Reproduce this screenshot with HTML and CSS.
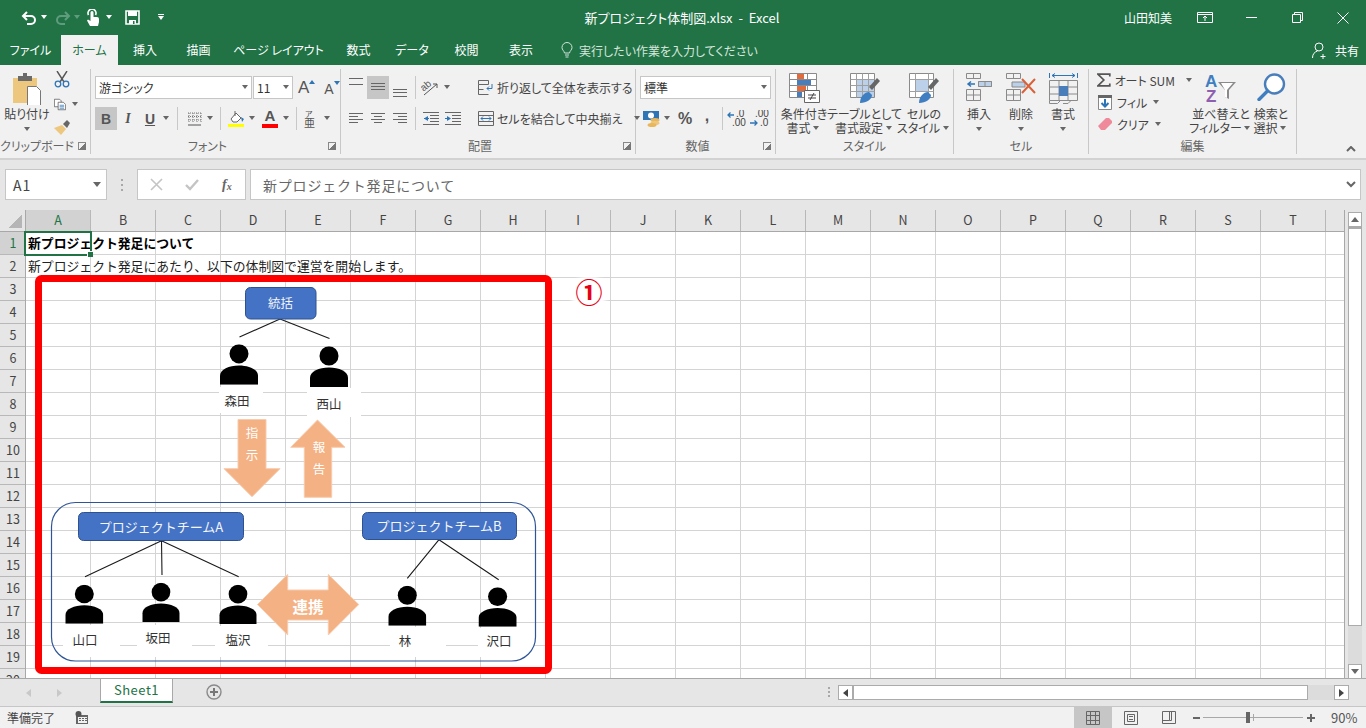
FILE: index.html
```html
<!DOCTYPE html>
<html lang="ja">

<head>
    <meta charset="UTF-8">
    <title>新プロジェクト体制図.xlsx - Excel</title>
    <link rel="stylesheet" href="styles.css">
</head>

<body>
    <!-- タイトルバー -->
    <div class="titlebar">
        <div class="qat">
            <svg class="q-undo" width="16" height="16" viewBox="0 0 16 16"><path d="M6 2L2 6l4 4M2 6h8a4 4 0 0 1 0 8H6" fill="none" stroke="#fff" stroke-width="2"/></svg>
            <i class="cr w q1"></i>
            <svg class="q-redo" width="16" height="16" viewBox="0 0 16 16"><path d="M10 2l4 4-4 4M14 6H6a4 4 0 0 0 0 8h4" fill="none" stroke="#5f9c7d" stroke-width="2"/></svg>
            <i class="cr d q2"></i>
            <svg class="q-hand" width="14" height="17" viewBox="0 0 14 17"><path d="M2.5 6a4 4 0 1 1 7 0" fill="none" stroke="#fff" stroke-width="1.6"/><path d="M4.5 3.5a1.5 1.5 0 0 1 3 0V8h3.5a2 2 0 0 1 2 2v3l-1 4H4L1 11.500l1-1 2.500 1.500z" fill="#fff"/></svg>
            <i class="cr w q3"></i>
            <svg class="q-save" width="15" height="15" viewBox="0 0 15 15"><path d="M1 1h13v13H1z" fill="none" stroke="#fff" stroke-width="1.600"/><path d="M3 1h9v5H3zM4 10h7v4H4z" fill="#fff"/><path d="M8 11h1.500v3H8z" fill="#217346"/></svg>
            <span class="q-more"><b></b><i class="cr w"></i></span>
        </div>
        <div class="doc">新プロジェクト体制図.xlsx &nbsp;- &nbsp;Excel</div>
        <div class="winbtns">
            <span class="user">山田知美</span>
            <span class="wb"><svg width="16" height="12" viewBox="0 0 16 12"><path d="M.5.500h15v10H.5zM.5 2.500h15M8 9V4.500M6 6l2-2 2 2" fill="none" stroke="#fff"/></svg></span>
            <span class="wb"><svg width="11" height="11" viewBox="0 0 11 11"><path d="M0 5.500h11" stroke="#fff"/></svg></span>
            <span class="wb"><svg width="11" height="11" viewBox="0 0 11 11"><path d="M.5 2.500h8v8h-8zM2.500 2.500v-2h8v8h-2" fill="none" stroke="#fff"/></svg></span>
            <span class="wb"><svg width="12" height="12" viewBox="0 0 12 12"><path d="M.5.500l11 11M11.500.500l-11 11" stroke="#fff"/></svg></span>
        </div>
    </div>

    <!-- タブ -->
    <div class="tabs">
        <span>ファイル</span>
        <span class="on">ホーム</span>
        <span>挿入</span>
        <span>描画</span>
        <span>ページ レイアウト</span>
        <span>数式</span>
        <span>データ</span>
        <span>校閲</span>
        <span>表示</span>
        <div class="tell">
            <svg width="12" height="16" viewBox="0 0 12 16"><path d="M3.500 11C3 8.500 1 8 1 5.500a5 5 0 0 1 10 0C11 8 9 8.500 8.500 11zM4 13h4M4.500 15h3" fill="none" stroke="#cfe3d8"/></svg>
            実行したい作業を入力してください
        </div>
        <div class="share">
            <svg width="16" height="17" viewBox="0 0 16 17"><circle cx="7" cy="5" r="4" fill="none" stroke="#fff"/><path d="M.5 16c0-4 2-6 5-7M11 12v5M8.500 14.500h5" fill="none" stroke="#fff"/></svg>
            共有
        </div>
    </div>

    <!-- リボン -->
    <div class="ribbon">
        <div class="group g-clip">
            <div class="gbody">
                <div class="big paste">
                    <div class="bigicon">
                        <svg width="30" height="32" viewBox="0 0 30 32"><path d="M1 5h24v25H1z" fill="#eec77f"/><path d="M6 3h5V0h4v3h5v5H6z" fill="#6a6a6a"/><path d="M15.500 13.500h9l4 4v15h-13z" fill="#fff" stroke="#777"/></svg>
                    </div>
                    <div class="txt">貼り付け</div>
                    <i class="cr"></i>
                </div>
                <div class="cliptools">
                    <svg width="16" height="17" viewBox="0 0 16 17"><path d="M3 0l7 11M13 0L6 11" stroke="#555" stroke-width="1.400" fill="none"/><circle cx="4" cy="13" r="2.800" fill="none" stroke="#2e75b6" stroke-width="1.300"/><circle cx="12" cy="13" r="2.800" fill="none" stroke="#2e75b6" stroke-width="1.300"/></svg>
                    <div class="copy">
                        <svg width="16" height="15" viewBox="0 0 16 15"><path d="M.5.500h7l2 2v8H.5z" fill="#fff" stroke="#555"/><path d="M5.500 4.500h7l3 3v7h-10z" fill="#fff" stroke="#555"/><path d="M7.500 8.500h6M7.500 10.500h6M7.500 12.500h6" stroke="#2e75b6"/></svg>
                        <i class="cr"></i>
                    </div>
                    <svg width="17" height="16" viewBox="0 0 17 16"><path d="M8 5l4 4-5 6-7-7z" fill="#eec77f"/><path d="M9 4l4-4 3 3-3 5z" fill="#666"/></svg>
                </div>
            </div>
            <div class="glabel"><span>クリップボード</span><i class="launch"></i></div>
        </div>

        <div class="group g-font">
            <div class="gbody rows">
                <div class="row">
                    <div class="combo c-font">游ゴシック<i class="cr"></i></div>
                    <div class="combo c-size">11<i class="cr"></i></div>
                    <span class="grow">A<svg width="6" height="4" viewBox="0 0 6 4"><path d="M0 4l3-4 3 4z" fill="#2e75b6"/></svg></span>
                    <span class="shrink">A<svg width="6" height="4" viewBox="0 0 6 4"><path d="M0 0l3 4 3-4z" fill="#2e75b6"/></svg></span>
                </div>
                <div class="row">
                    <span class="tb act t-b">B</span>
                    <span class="tb t-i">I</span>
                    <span class="tb t-u">U</span>
                    <i class="cr"></i>
                    <span class="sp"></span>
                    <span class="tb">
                        <svg width="15" height="14" viewBox="0 0 15 14"><path d="M1 1h13M1 4.500h13M1 8h13M2 1v10M6 1v10M10 1v10M14 1v10" stroke="#777" stroke-dasharray="1 1" fill="none"/><path d="M1 13h13" stroke="#555"/></svg>
                    </span>
                    <i class="cr"></i>
                    <span class="sp s-tight"></span>
                    <span class="tb">
                        <svg width="18" height="18" viewBox="0 0 18 18"><path d="M4 9l5-6 5 5-4 4H6z" fill="#fff" stroke="#666"/><path d="M8 1v5" stroke="#666"/><path d="M14 7l3 2-2 3z" fill="#2e75b6"/><path d="M1 14h16v3H1z" fill="#ff0"/></svg>
                    </span>
                    <i class="cr"></i>
                    <span class="tb t-color">A<b></b></span>
                    <i class="cr"></i>
                    <span class="sp s-tight"></span>
                    <span class="tb t-ph">
                        <svg width="16" height="18" viewBox="0 0 16 18"><text class="ph1" x="3" y="7">ア</text><text class="ph2" x="2" y="17">亜</text></svg>
                    </span>
                    <i class="cr cr-ph"></i>
                </div>
            </div>
            <div class="glabel"><span>フォント</span><i class="launch"></i></div>
        </div>

        <div class="group g-align">
            <div class="gbody alignbody">
                <div class="rows acol">
                    <div class="row">
                        <span class="tb"><svg width="22" height="23" viewBox="0 0 22 23"><path class="ln" d="M4 2.500h14M4 8.500h14"/></svg></span>
                        <span class="tb act"><svg width="22" height="23" viewBox="0 0 22 23"><path class="ln" d="M4 7.500h14M4 10.500h14M4 13.500h14"/></svg></span>
                        <span class="tb"><svg width="22" height="23" viewBox="0 0 22 23"><path class="ln" d="M4 13.500h14M4 16.500h14M4 20.500h14"/></svg></span>
                        <span class="sp s-al"></span>
                        <span class="tb"><svg width="20" height="18" viewBox="0 0 20 18"><text class="ori" x="0" y="10" transform="rotate(-40 5 8)">ab</text><path d="M3 16L16 5M16 5h-4M16 5v4" fill="none" stroke="#555"/></svg></span>
                        <i class="cr"></i>
                    </div>
                    <div class="row">
                        <span class="tb"><svg width="22" height="23" viewBox="0 0 22 23"><path class="ln" d="M4 6.500h14M4 9.500h9M4 12.500h14M4 15.500h9"/></svg></span>
                        <span class="tb"><svg width="22" height="23" viewBox="0 0 22 23"><path class="ln" d="M4 6.500h14M7 9.500h8M4 12.500h14M7 15.500h8"/></svg></span>
                        <span class="tb"><svg width="22" height="23" viewBox="0 0 22 23"><path class="ln" d="M4 6.500h14M9 9.500h9M4 12.500h14M9 15.500h9"/></svg></span>
                        <span class="sp s-al"></span>
                        <span class="tb"><svg width="22" height="23" viewBox="0 0 22 23"><path class="ln" d="M3 5.500h16M10 8.500h9M10 11.500h9M10 14.500h9M3 17.500h16"/><path d="M8 9l-4 2.500L8 14z" fill="#2e75b6"/><path d="M4 11.500h5" stroke="#2e75b6"/></svg></span>
                        <span class="tb"><svg width="22" height="23" viewBox="0 0 22 23"><path class="ln" d="M3 5.500h16M10 8.500h9M10 11.500h9M10 14.500h9M3 17.500h16"/><path d="M5 9l4 2.500L5 14z" fill="#2e75b6"/><path d="M3 11.500h3" stroke="#2e75b6"/></svg></span>
                    </div>
                </div>
                <span class="vsep"></span>
                <div class="rows">
                    <div class="row wrapitem">
                        <svg width="16" height="15" viewBox="0 0 16 15"><path class="ln" d="M.5.500h10v4H.5zM.5 4.500v10h10M.5 9.500h5"/><path d="M14 4v4.500H9M11 6.500l-2 2 2 2" fill="none" stroke="#2e75b6"/></svg>
                        <span>折り返して全体を表示する</span>
                    </div>
                    <div class="row wrapitem">
                        <svg width="16" height="15" viewBox="0 0 16 15"><path class="ln" d="M.5.500h15v14H.5zM.5 4.500h15M.5 10.500h15"/><path d="M3 7.500h10M5 5.500l-2 2 2 2M11 5.500l2 2-2 2" fill="none" stroke="#2e75b6"/></svg>
                        <span>セルを結合して中央揃え</span>
                        <i class="cr cr-merge"></i>
                    </div>
                </div>
            </div>
            <div class="glabel"><span>配置</span><i class="launch"></i></div>
        </div>

        <div class="group g-num">
            <div class="gbody rows">
                <div class="row"><div class="combo c-num">標準<i class="cr"></i></div></div>
                <div class="row">
                    <span class="tb">
                        <svg width="17" height="16" viewBox="0 0 17 16"><path d="M0 0h16v9H0z" fill="#2e75b6"/><circle cx="8" cy="4.500" r="3" fill="#fff"/><ellipse cx="12" cy="9" rx="4.500" ry="2" fill="#e8b75a"/><ellipse cx="12" cy="12" rx="4.500" ry="2" fill="#eec77f"/><ellipse cx="9" cy="14" rx="4.500" ry="2" fill="#e8b75a"/></svg>
                    </span>
                    <i class="cr"></i>
                    <span class="tb t-pct">%</span>
                    <span class="tb t-comma">,</span>
                    <span class="sp s-num"></span>
                    <span class="tb">
                        <svg width="20" height="18" viewBox="0 0 20 18"><text class="dec" x="9" y="7">.0</text><text class="dec" x="5" y="16">.00</text><path d="M1 5h6M3.500 2.500L1 5l2.500 2.500" fill="none" stroke="#2e75b6" stroke-width="1.300"/></svg>
                    </span>
                    <span class="tb">
                        <svg width="20" height="18" viewBox="0 0 20 18"><text class="dec" x="6" y="7">.00</text><text class="dec" x="11" y="16">.0</text><path d="M1 13h7M5.500 10.500L8 13l-2.500 2.500" fill="none" stroke="#2e75b6" stroke-width="1.300"/></svg>
                    </span>
                </div>
            </div>
            <div class="glabel"><span>数値</span><i class="launch launch-on"></i></div>
        </div>

        <div class="group g-style">
            <div class="gbody">
                <div class="big b-cond">
                    <div class="bigicon">
                        <svg width="31" height="30" viewBox="0 0 31 30"><path d="M.5.500h27v24H.5zM.5 6.500h27M.5 12.500h27M.5 18.500h27M8.500.500v24M18.500.500v24" fill="#fff" stroke="#8a8a8a"/><path d="M8 1h7v5H8z" fill="#e06b3f"/><path d="M8 7h14v5H8z" fill="#4a7ebb"/><path d="M8 13h9v5H8z" fill="#e06b3f"/><path d="M8 19h5v5H8z" fill="#4a7ebb"/><path d="M15.500 17.500h15v12h-15z" fill="#fff" stroke="#666"/><path d="M19 22h8M19 25h8M25 20l-4 7" stroke="#444" fill="none"/></svg>
                    </div>
                    <div class="txt">条件付き</div>
                    <div class="txt">書式<i class="cr cr-in"></i></div>
                </div>
                <div class="big b-table">
                    <div class="bigicon">
                        <svg width="30" height="30" viewBox="0 0 30 30"><path d="M.5.500h24v24H.5z" fill="#fff" stroke="#8a8a8a"/><path d="M6 6h18v18H6z" fill="#bdd0e9"/><path d="M.5 6.500h24M.5 12.500h24M.5 18.500h24M6.500.500v24M12.500.500v24M18.500.500v24" stroke="#a0a0a0"/><path d="M19 14l8-9 3 3-8 9z" fill="#666"/><path d="M10 30c0-7 5-11 9-11l3 3c0 4-5 8-12 8z" fill="#3f7fc1"/></svg>
                    </div>
                    <div class="txt">テーブルとして</div>
                    <div class="txt">書式設定<i class="cr cr-in"></i></div>
                </div>
                <div class="big b-cell">
                    <div class="bigicon">
                        <svg width="30" height="30" viewBox="0 0 30 30"><path d="M.5.500h24v24H.5z" fill="#fff" stroke="#8a8a8a"/><path d="M6 6h14v12H6z" fill="#bdd0e9"/><path d="M.5 6.500h24M.5 18.500h24M6.500.500v24M19.500.500v24" stroke="#a0a0a0"/><path d="M19 14l8-9 3 3-8 9z" fill="#666"/><path d="M10 30c0-7 5-11 9-11l3 3c0 4-5 8-12 8z" fill="#3f7fc1"/></svg>
                    </div>
                    <div class="txt">セルの</div>
                    <div class="txt">スタイル<i class="cr cr-in"></i></div>
                </div>
            </div>
            <div class="glabel"><span>スタイル</span></div>
        </div>

        <div class="group g-cell">
            <div class="gbody">
                <div class="big b-c">
                    <div class="bigicon">
                        <svg width="26" height="28" viewBox="0 0 26 28"><path class="ln2" d="M.5.500h14v5H.5zM7.500.500v5M.5 16.500h14v11H.5zM.5 22h14M7.500 16.500v11M12.500 8.500h13v5h-13zM19 8.500v5"/><path d="M12 8.500h13v5H12z" fill="#bdd0e9"/><path class="ln2" d="M12.500 8.500h13v5h-13zM19 8.500v5"/><path d="M2 11h7M5 8.500L2 11l3 2.500" fill="none" stroke="#2e75b6" stroke-width="1.500"/></svg>
                    </div>
                    <div class="txt">挿入</div>
                    <i class="cr"></i>
                </div>
                <div class="big b-c">
                    <div class="bigicon">
                        <svg width="30" height="28" viewBox="0 0 30 28"><path class="ln2" d="M.5.500h14v5H.5zM7.500.500v5M.5 16.500h14v11H.5zM.5 22h14M7.500 16.500v11"/><path d="M6 9h13v5H6z" fill="#bdd0e9" stroke="#888"/><path d="M16 6l13 14M29 6L16 20" stroke="#d9603a" stroke-width="2"/></svg>
                    </div>
                    <div class="txt">削除</div>
                    <i class="cr"></i>
                </div>
                <div class="big b-c">
                    <div class="bigicon">
                        <svg width="29" height="32" viewBox="0 0 29 32"><path d="M.5 0v5M28.500 0v5M3 2.500h23M6 .500L3 2.500l3 2M23 .500l3 2-3 2" fill="none" stroke="#2e75b6"/><path class="ln2" d="M.5 7.500h28v20H.5zM.5 14h28M.5 21h28M10 7.500v20M19 7.500v20"/><path d="M10 13h9v10h-9z" fill="#4a7ebb"/><path class="ln2" d="M.5 27.500v3h8l3-3M14 30.500h5l3-3"/></svg>
                    </div>
                    <div class="txt">書式</div>
                    <i class="cr"></i>
                </div>
            </div>
            <div class="glabel"><span>セル</span></div>
        </div>

        <div class="group g-edit">
            <div class="gbody">
                <div class="editcol">
                    <div class="eitem">
                        <svg width="16" height="16" viewBox="0 0 16 16"><path d="M15 4V1H1l7 7-7 7h14v-3" fill="none" stroke="#555" stroke-width="2"/></svg>
                        <span>オート SUM</span><i class="cr cr-sum"></i>
                    </div>
                    <div class="eitem">
                        <svg width="16" height="16" viewBox="0 0 16 16"><path d="M1.500 1.500h13v14h-13z" fill="#fff" stroke="#888"/><path d="M1 1h14v3H1z" fill="#666"/><path d="M8 5v7M4.500 9L8 12.500 11.500 9" fill="none" stroke="#2e75b6" stroke-width="2"/></svg>
                        <span>フィル</span><i class="cr"></i>
                    </div>
                    <div class="eitem">
                        <svg width="16" height="14" viewBox="0 0 16 14"><path d="M1 9l8-8h3l3 3v2l-7 7H4z" fill="#ef8a9b"/></svg>
                        <span>クリア</span><i class="cr"></i>
                    </div>
                </div>
                <div class="big b-sort">
                    <div class="bigicon">
                        <svg width="32" height="30" viewBox="0 0 32 30"><text class="az a" x="0" y="14">A</text><text class="az z" x="1" y="29">Z</text><path d="M13 9h18l-7 8v9l-4-2v-7z" fill="#8a8a8a"/><path d="M20 17v7l2 1v-8l6-7h-12z" fill="#fff"/></svg>
                    </div>
                    <div class="txt">並べ替えと</div>
                    <div class="txt">フィルター<i class="cr cr-in"></i></div>
                </div>
                <div class="big b-find">
                    <div class="bigicon">
                        <svg width="29" height="28" viewBox="0 0 29 28"><circle cx="17.500" cy="11" r="9.500" fill="#fff" stroke="#4a7ebb" stroke-width="2.400"/><path d="M10.500 18L2 26.500" stroke="#3f7fc1" stroke-width="3.400" stroke-linecap="round"/></svg>
                    </div>
                    <div class="txt">検索と</div>
                    <div class="txt">選択<i class="cr cr-in"></i></div>
                </div>
            </div>
            <div class="glabel"><span>編集</span></div>
        </div>

        <div class="collapse">
            <svg width="10" height="6" viewBox="0 0 10 6"><path d="M1 5l4-4 4 4" fill="none" stroke="#666" stroke-width="2"/></svg>
        </div>
    </div>

    <!-- 数式バー -->
    <div class="fbar">
        <div class="namebox">A1<i class="cr cr-big"></i></div>
        <div class="dots"><b></b><b></b><b></b></div>
        <div class="fbtns">
            <svg width="13" height="13" viewBox="0 0 13 13"><path d="M1 1l11 11M12 1L1 12" stroke="#c4c4c4" stroke-width="1.600"/></svg>
            <svg width="14" height="12" viewBox="0 0 14 12"><path d="M1 6l4 4 8-9" fill="none" stroke="#c4c4c4" stroke-width="2.400"/></svg>
            <span class="fx">f<sub>x</sub></span>
        </div>
        <div class="finput">新プロジェクト発足について<svg width="10" height="7" viewBox="0 0 10 7"><path d="M1 1l4 4 4-4" fill="none" stroke="#666" stroke-width="2"/></svg></div>
    </div>

    <!-- シート -->
    <div class="sheet">
        <div class="corner"><i></i></div>
        <div class="colhead">
            <span class="sel">A</span><span>B</span><span>C</span><span>D</span><span>E</span>
            <span>F</span><span>G</span><span>H</span><span>I</span><span>J</span>
            <span>K</span><span>L</span><span>M</span><span>N</span><span>O</span>
            <span>P</span><span>Q</span><span>R</span><span>S</span><span>T</span>
        </div>
        <div class="vscroll">
            <div class="sbtn"><i class="up"></i></div>
            <div class="vthumb"></div>
            <div class="sbtn"><i class="down"></i></div>
        </div>
        <div class="rowhead">
            <span class="sel">1</span><span>2</span><span>3</span><span>4</span><span>5</span>
            <span>6</span><span>7</span><span>8</span><span>9</span><span>10</span>
            <span>11</span><span>12</span><span>13</span><span>14</span><span>15</span>
            <span>16</span><span>17</span><span>18</span><span>19</span><span>20</span>
        </div>
        <div class="cells">
            <div class="crow bold">新プロジェクト発足について</div>
            <div class="crow">新プロジェクト発足にあたり、以下の体制図で運営を開始します。</div>
        </div>

        <!-- 選択セル -->
        <div class="selcell"><i></i></div>

        <!-- 図形 (座標は画面のまま) -->
        <svg class="shapes" width="1366" height="468" viewBox="0 210 1366 468">
            <defs>
                <symbol id="person" viewBox="0 0 38 40" preserveAspectRatio="none">
                    <circle cx="19" cy="9.500" r="9.500"/>
                    <path d="M0 40V31C0 25 9 21 19 21S38 25 38 31V40Z"/>
                </symbol>
            </defs>

            <g fill="#fff">
                <rect x="219" y="387" width="44" height="26"/>
                <rect x="307" y="388" width="54" height="29"/>
                <rect x="63" y="625" width="57" height="32"/>
                <rect x="137" y="625" width="55" height="32"/>
                <rect x="215" y="626" width="53" height="31"/>
                <rect x="390" y="627" width="56" height="30"/>
                <rect x="478" y="628" width="56" height="29"/>
            </g>

            <rect class="frame" x="38.500" y="278.500" width="510" height="392" rx="3"/>
            <rect class="team" x="51.500" y="502.500" width="484" height="158.500" rx="24"/>

            <g class="lines">
                <path d="M280 319L239.500 337M280 319L329.500 338.500"/>
                <path d="M161.500 540.700L85 576.700M161.500 540.700L162 575M161.500 540.700L238.700 576.700"/>
                <path d="M439 539.700L407.300 578.300M439 539.700L498.700 579.700"/>
            </g>

            <rect class="box" x="245.500" y="287.500" width="70.500" height="31.500" rx="5"/>
            <rect class="box" x="78.500" y="512.500" width="165" height="28" rx="5"/>
            <rect class="box" x="362.500" y="512.500" width="154" height="27" rx="5"/>
            <text class="boxtxt" x="280.500" y="308">統括</text>
            <text class="boxtxt wide" x="161" y="531.500">プロジェクトチームA</text>
            <text class="boxtxt wide" x="439" y="531">プロジェクトチームB</text>

            <g class="people">
                <use href="#person" x="220" y="344.200" width="38" height="40.500"/>
                <use href="#person" x="310" y="346.200" width="38" height="40.800"/>
                <use href="#person" x="65.300" y="584.800" width="38" height="39"/>
                <use href="#person" x="142.300" y="582.800" width="37.400" height="39.200"/>
                <use href="#person" x="219.300" y="584.800" width="37.400" height="39.200"/>
                <use href="#person" x="388.300" y="585.800" width="38" height="39.900"/>
                <use href="#person" x="478.500" y="587.200" width="38.200" height="39.500"/>
            </g>

            <g class="names">
                <text x="237" y="406">森田</text>
                <text x="329" y="408.500">西山</text>
                <text x="85" y="645">山口</text>
                <text x="158" y="643">坂田</text>
                <text x="238" y="645">塩沢</text>
                <text x="405" y="645.500">林</text>
                <text x="499" y="646">沢口</text>
            </g>

            <g class="arrows">
                <path d="M238 419.500H266V468.700H280L252 496.700L224 468.700H238Z"/>
                <path d="M317.500 420L345 447.300H331.700V497.300H304.300V447.300H290.700Z"/>
                <path d="M257.500 604.500L287.700 574.500V590H328.300V574.500L358.700 604.500L328.300 635V620H287.700V635Z"/>
            </g>
            <g class="arrowtxt">
                <text x="252" y="438">指</text>
                <text x="252" y="460">示</text>
                <text x="319" y="452">報</text>
                <text x="319" y="474">告</text>
                <text class="renkei" x="308" y="612.500">連携</text>
            </g>

            <!-- ① -->
            <circle class="numring" cx="589" cy="294" r="18"/>
            <text class="num" x="589" y="303">①</text>
        </svg>
    </div>

    <!-- シートタブ -->
    <div class="sheettabs">
        <div class="tabnav"><i class="tl"></i><i class="tr"></i></div>
        <div class="stab">Sheet1</div>
        <svg class="addsheet" width="16" height="16" viewBox="0 0 16 16"><circle cx="8" cy="8" r="7" fill="none" stroke="#8a8a8a" stroke-width="1.400"/><path d="M8 4v8M4 8h8" stroke="#777" stroke-width="2"/></svg>
        <div class="hdots"><b></b><b></b><b></b></div>
        <div class="sbtn h"><i class="left"></i></div>
        <div class="hthumb"></div>
        <div class="htrack"></div>
        <div class="sbtn h"><i class="right"></i></div>
    </div>

    <!-- ステータスバー -->
    <div class="status">
        <span class="ready">準備完了</span>
        <svg width="14" height="13" viewBox="0 0 14 13"><path d="M1 4h12v9H1z" fill="#666"/><circle cx="3.500" cy="3" r="3" fill="#555"/><path d="M3 6h9v6H3z" fill="#f1f1f1"/><path d="M4 7h2v1H4zM7 7h2v1H7zM10 7h2v1h-2zM4 9h2v1H4zM7 9h2v1H7zM10 9h2v1h-2z" fill="#666"/></svg>
        <div class="views">
            <span class="on"><svg width="14" height="14" viewBox="0 0 14 14"><path class="ln" d="M.5.500h13v13H.5zM.5 4.500h13M.5 9.500h13M4.500.500v13M9.500.500v13"/></svg></span>
            <span><svg width="14" height="14" viewBox="0 0 14 14"><path class="ln" d="M.5.500h13v13H.5zM3.500 3.500h7v7h-7zM5 5.500h4M5 8.500h4"/></svg></span>
            <span><svg width="14" height="14" viewBox="0 0 14 14"><path class="ln" d="M.5.500h13v12H.5zM.5 9.500h7v-9M7.500 9.500h2v-9"/></svg></span>
        </div>
        <b class="zminus"></b>
        <div class="zslider"><i class="knob"></i><i class="tick"></i></div>
        <b class="zplus"></b>
        <span class="zoom">90%</span>
    </div>
</body>

</html>
```
FILE: styles.css
```css
* {
    margin: 0;
    padding: 0;
    box-sizing: border-box;
}

body {
    width: 1366px;
    height: 728px;
    overflow: hidden;
    background-color: #e6e6e6;
    color: #444;
    font-family: "Noto Sans CJK JP", "Noto Sans", sans-serif;
    font-size: 12px;
    font-feature-settings: "palt";
}

i {
    display: block;
    font-style: normal;
}

/* ドロップダウンの三角 */
.cr {
    flex: none;
    width: 10px;
    height: 5px;
    display: flex;
    justify-content: center;
}

.cr::before {
    content: "";
    border-left: 3.5px solid transparent;
    border-right: 3.5px solid transparent;
    border-top: 4px solid #666;
}

.cr.w::before {
    border-top-color: #fff;
}

.cr.d::before {
    border-top-color: #5f9c7d;
}

/* タイトルバー */
.titlebar {
    height: 35px;
    background-color: #217346;
    color: #fff;
    display: grid;
    grid-template-columns: 1fr auto 1fr;
    align-items: center;
}

.qat {
    display: flex;
    align-items: center;
    padding-left: 21px;
}

.q-redo {
    margin-left: 6px;
    margin-top: 0;
}

.qat .q1 {
    margin-left: 2px;
}

.qat .q2 {
    margin-left: 1px;
}

.q-hand {
    margin-left: 4px;
}

.qat .q3 {
    margin-left: 4px;
}

.q-save {
    margin-left: 11px;
}

.q-more {
    margin-left: 16px;
    display: flex;
    flex-direction: column;
    align-items: center;
    gap: 1px;
}

.q-more b {
    width: 6px;
    height: 1px;
    background-color: #fff;
}

.doc {
    font-size: 13px;
    margin-right: 2px;
    white-space: nowrap;
}

.winbtns {
    display: flex;
    justify-content: flex-end;
    align-items: center;
}

.user {
    margin-right: 10px;
}

.wb {
    width: 46px;
    height: 35px;
    display: flex;
    align-items: center;
    justify-content: center;
}

/* タブ */
.tabs {
    height: 30px;
    background-color: #217346;
    color: #fff;
    display: grid;
    grid-template-columns: 61px 57px 54px 53px 107px 53px 54px 55px 54px auto 1fr;
    align-items: center;
}

.tabs span {
    height: 30px;
    line-height: 29px;
    text-align: center;
    white-space: nowrap;
}

.tabs .on {
    background-color: #f1f1f1;
    color: #217346;
}

.tell {
    display: flex;
    align-items: center;
    gap: 6px;
    padding-left: 13px;
    color: #d6e6dc;
}

.share {
    display: flex;
    justify-content: flex-end;
    align-items: center;
    gap: 7px;
    padding-right: 7px;
}

/* リボン */
.ribbon {
    height: 95px;
    padding-top: 4px;
    background-color: #f1f1f1;
    border-bottom: 2px solid #d2d2d2;
    display: flex;
    position: relative;
}

.group {
    height: 85px;
    border-right: 1px solid #c8c8c8;
    display: flex;
    flex-direction: column;
}

.g-clip { width: 91px; }
.g-font { width: 250px; }
.g-align { width: 295px; }
.g-num { width: 140px; }
.g-style { width: 178px; }
.g-cell { width: 135px; }
.g-edit { width: 208px; }

.gbody {
    height: 73px;
    display: flex;
}

.glabel {
    height: 16px;
    line-height: 16px;
    display: flex;
    color: #666;
}

.glabel span {
    flex: 1;
    text-align: center;
}

.launch {
    width: 16px;
    display: flex;
    align-items: center;
    justify-content: center;
}

.launch::before {
    content: "";
    width: 7px;
    height: 7px;
    border-left: 1px solid #888;
    border-top: 1px solid #888;
    background: linear-gradient(135deg, transparent 50%, #777 50%);
}

.rows {
    flex-direction: column;
    gap: 8px;
    padding-top: 7px;
    display: flex;
}

.row {
    height: 23px;
    display: flex;
    align-items: center;
}

.g-font .gbody {
    padding-left: 4px;
}

.g-num .gbody {
    padding-left: 4px;
}

.combo {
    height: 23px;
    background-color: #fff;
    border: 1px solid #c6c6c6;
    display: flex;
    align-items: center;
    justify-content: space-between;
    padding: 0 1px 0 3px;
    color: #333;
}

.c-font { width: 157px; }
.c-size { width: 40px; margin-left: 1px; }
.c-num { width: 131px; }

.grow,
.shrink {
    display: flex;
    align-items: flex-start;
    font-family: "Liberation Sans", sans-serif;
    color: #555;
}

.grow {
    font-size: 17px;
    margin-left: 5px;
}

.grow svg {
    margin-top: 2px;
}

.shrink {
    font-size: 14px;
    margin-left: 9px;
    margin-top: 3px;
}

.shrink svg {
    margin-top: 0;
}

.tb {
    flex: none;
    width: 22px;
    height: 23px;
    display: flex;
    align-items: center;
    justify-content: center;
    font-family: "Liberation Sans", sans-serif;
    color: #555;
}

.act {
    background-color: #c6c6c6;
}

.t-b {
    font-size: 14px;
    font-weight: bold;
}

.t-i {
    font-size: 14px;
    font-family: "Liberation Serif", serif;
    font-style: italic;
    font-weight: bold;
}

.t-u {
    font-size: 14px;
    font-weight: bold;
    text-decoration: underline;
}

.t-color {
    margin-left: 2px;
    flex-direction: column;
    font-size: 15px;
    font-weight: bold;
    line-height: 14px;
}

.t-color b {
    width: 16px;
    height: 4px;
    background-color: #f00;
    margin-top: 1px;
}

.t-ph {
    width: 18px;
}

.cr-ph {
    margin-left: 3px;
}

.ph1,
.ph2 {
    font-family: "Noto Sans CJK JP", sans-serif;
    fill: #555;
}

.ph1 { font-size: 8px; }
.ph2 { font-size: 11px; }

.sp {
    flex: none;
    width: 12px;
    height: 23px;
    display: flex;
    justify-content: center;
}

.sp::before {
    content: "";
    width: 1px;
    background-color: #c8c8c8;
}

.s-tight { width: 10px; }
.s-al { width: 9px; }
.s-num { width: 8px; }

.ln {
    fill: none;
    stroke: #666;
}

.ln2 {
    fill: none;
    stroke: #8a8a8a;
}

.ori {
    font-size: 10px;
    font-family: "Liberation Sans", sans-serif;
    fill: #555;
}

.dec {
    font-size: 10px;
    font-family: "Liberation Sans", sans-serif;
    fill: #444;
}

.alignbody {
    padding-left: 4px;
}

.acol {
    width: 119px;
}

.vsep {
    width: 1px;
    height: 54px;
    margin: 7px 7px 0 4px;
    background-color: #c8c8c8;
}

.wrapitem {
    gap: 3px;
    white-space: nowrap;
    margin-left: -4px;
    padding-left: 7px;
}

.wrapitem span {
    margin-left: 0;
}

.cr-merge {
    margin-left: 7px;
}

.t-pct {
    margin-left: 2px;
    font-size: 16px;
    font-weight: bold;
}

.t-comma {
    font-size: 16px;
    font-weight: bold;
    padding-bottom: 6px;
}

/* 大きいボタン */
.big {
    flex: none;
    display: flex;
    flex-direction: column;
    align-items: center;
}

.bigicon {
    height: 38px;
    padding-top: 4px;
    display: flex;
    align-items: flex-start;
}

.txt {
    height: 14px;
    line-height: 14px;
    white-space: nowrap;
    display: flex;
    align-items: center;
}

.big > .cr {
    margin-top: 6px;
}

.cr-in {
    width: 11px;
}

.paste { width: 54px; }
.paste .txt { font-size: 12px; }

.cliptools {
    width: 26px;
    padding-top: 2px;
    display: flex;
    flex-direction: column;
    gap: 8px;
}

.copy {
    display: flex;
    align-items: center;
    gap: 4px;
    margin-top: 1px;
}

.b-cond { width: 56px; }
.b-table { width: 65px; }
.b-cell { width: 54px; }
.b-c { width: 42px; }

.g-cell .gbody {
    padding-left: 4px;
}

.g-edit .gbody {
    padding-left: 6px;
}

.editcol {
    width: 99px;
}

.eitem {
    height: 22px;
    display: flex;
    align-items: center;
    gap: 4px;
    white-space: nowrap;
}

.eitem svg {
    margin-left: 2px;
}

.cr-sum {
    margin-left: 5px;
}

.az {
    font-family: "Liberation Sans", sans-serif;
    font-weight: bold;
    font-size: 17px;
}

.a { fill: #3f7fc1; }
.z { fill: #8e5eb0; }

.b-sort { width: 54px; }
.b-find { width: 46px; }

.collapse {
    flex: 1;
    display: flex;
    justify-content: flex-end;
    align-items: flex-end;
    padding: 0 10px 6px 0;
}

/* 数式バー */
.fbar {
    height: 50px;
    padding: 9px 5px 10px;
    display: flex;
    font-feature-settings: normal;
}

.namebox {
    width: 102px;
    background-color: #fff;
    border: 1px solid #c6c6c6;
    display: flex;
    align-items: center;
    justify-content: space-between;
    padding: 0 4px 0 7px;
    font-size: 14px;
    letter-spacing: 1px;
}

.cr-big::before {
    border-left-width: 4px;
    border-right-width: 4px;
    border-top-width: 5px;
}

.dots {
    width: 30px;
    display: flex;
    flex-direction: column;
    align-items: center;
    justify-content: center;
    gap: 3px;
}

.dots b {
    width: 2px;
    height: 2px;
    background-color: #a8a8a8;
}

.fbtns {
    width: 109px;
    background-color: #fff;
    border: 1px solid #c6c6c6;
    display: flex;
    align-items: center;
    padding-left: 12px;
    gap: 22px;
}

.fx {
    font-family: "Liberation Serif", serif;
    font-style: italic;
    font-weight: bold;
    font-size: 14px;
    color: #666;
    margin-left: 1px;
}

.fx sub {
    font-size: 10px;
    vertical-align: -1px;
}

.finput {
    flex: 1;
    margin-left: 4px;
    background-color: #fff;
    border: 1px solid #c6c6c6;
    display: flex;
    align-items: center;
    justify-content: space-between;
    padding: 0 4px 0 12px;
    font-size: 14px;
    letter-spacing: .8px;
    color: #666;
}

/* シート */
.sheet {
    height: 468px;
    position: relative;
    display: grid;
    grid-template-columns: 26px 1319px 21px;
    grid-template-rows: 22px 446px;
    font-feature-settings: normal;
}

.corner {
    border-right: 1px solid #a8a8a8;
    border-bottom: 1px solid #a8a8a8;
    padding: 5px 0 0 8px;
}

.corner i {
    width: 14px;
    height: 13px;
    background: linear-gradient(135deg, transparent 50%, #b5b5b5 50%);
}

.colhead {
    display: flex;
    border-bottom: 1px solid #a8a8a8;
    border-right: 1px solid #a8a8a8;
}

.colhead span {
    flex: none;
    width: 65px;
    height: 21px;
    line-height: 20px;
    text-align: center;
    border-right: 1px solid #b8b8b8;
    font-size: 12.500px;
}

.colhead .sel {
    background-color: #d2d2d2;
    color: #217346;
}

.rowhead {
    display: flex;
    flex-direction: column;
    overflow: hidden;
    border-right: 1px solid #a8a8a8;
}

.rowhead span {
    flex: none;
    height: 23px;
    line-height: 22px;
    text-align: center;
    border-bottom: 1px solid #b8b8b8;
    font-size: 12.500px;
    padding-left: 1px;
}

.rowhead .sel {
    background-color: #d2d2d2;
    color: #217346;
}

.cells {
    overflow: hidden;
    border-right: 1px solid #a8a8a8;
    background-color: #fff;
    background-image:
        repeating-linear-gradient(to right, transparent 0 64px, #d4d4d4 64px 65px),
        repeating-linear-gradient(to bottom, transparent 0 22px, #d4d4d4 22px 23px);
}

.crow {
    height: 23px;
    line-height: 21px;
    padding-left: 2px;
    font-size: 12.830px;
    white-space: nowrap;
    color: #222;
}

.bold {
    font-weight: bold;
    color: #000;
}

.selcell {
    position: absolute;
    left: 24px;
    top: 21px;
    width: 68px;
    height: 25px;
    border: 2px solid #217346;
}

.selcell i {
    position: absolute;
    right: -3px;
    bottom: -3px;
    width: 6px;
    height: 6px;
    background-color: #217346;
    border: 1px solid #fff;
    border-right: 0;
    border-bottom: 0;
}

.shapes {
    position: absolute;
    left: 0;
    top: 0;
    pointer-events: none;
}

.frame {
    fill: none;
    stroke: #f00;
    stroke-width: 7;
}

.team {
    fill: none;
    stroke: #2f5597;
    stroke-width: 1.200;
}

.lines path {
    fill: none;
    stroke: #1a1a1a;
    stroke-width: 1.100;
}

.box {
    fill: #4472c4;
    stroke: #2f528f;
}

.boxtxt {
    fill: #f4f6fb;
    font-size: 12.500px;
    text-anchor: middle;
}

.wide {
    font-size: 13px;
}

.people {
    fill: #000;
}

.names text {
    fill: #333;
    font-size: 12.500px;
    text-anchor: middle;
}

.arrows path {
    fill: #f4b183;
    stroke: #f8cbad;
}

.arrowtxt text {
    fill: #fff;
    font-size: 12.500px;
    text-anchor: middle;
}

.arrowtxt .renkei {
    font-size: 15.500px;
    font-weight: bold;
}

.numring {
    fill: #fff;
    filter: blur(2px);
}

.num {
    fill: #e60012;
    font-size: 27px;
    font-weight: bold;
    text-anchor: middle;
}

/* スクロールバー */
.vscroll {
    grid-column: 3;
    grid-row: 1 / 3;
    padding: 2px 4px 0 3px;
    display: flex;
    flex-direction: column;
}

.sbtn {
    flex: none;
    height: 15px;
    background-color: #fff;
    border: 1px solid #ababab;
    display: flex;
    align-items: center;
    justify-content: center;
}

.vthumb {
    flex: none;
    height: 399px;
    margin-top: 0;
    margin-bottom: 38px;
    background-color: #fff;
    border: 1px solid #ababab;
    border-top-width: 2px;
    box-shadow: 0 38px 0 #dcdcdc;
}

.up {
    border-left: 4px solid transparent;
    border-right: 4px solid transparent;
    border-bottom: 5px solid #666;
}

.down {
    border-left: 4px solid transparent;
    border-right: 4px solid transparent;
    border-top: 5px solid #666;
}

.left {
    border-top: 4px solid transparent;
    border-bottom: 4px solid transparent;
    border-right: 5px solid #444;
}

.right {
    border-top: 4px solid transparent;
    border-bottom: 4px solid transparent;
    border-left: 5px solid #444;
}

/* シートタブ */
.sheettabs {
    height: 28px;
    border-top: 1px solid #a8a8a8;
    display: flex;
    align-items: flex-start;
}

.tabnav {
    width: 100px;
    height: 27px;
    padding: 0 38px 0 26px;
    display: flex;
    align-items: center;
    justify-content: space-between;
}

.tl {
    border-top: 4px solid transparent;
    border-bottom: 4px solid transparent;
    border-right: 5px solid #c8c8c8;
}

.tr {
    border-top: 4px solid transparent;
    border-bottom: 4px solid transparent;
    border-left: 5px solid #c8c8c8;
}

.stab {
    width: 73px;
    height: 24px;
    background-color: #fff;
    border-left: 1px solid #a8a8a8;
    border-right: 1px solid #a8a8a8;
    border-bottom: 2px solid #217346;
    color: #217346;
    text-align: center;
    line-height: 21px;
    font-size: 13px;
    letter-spacing: .5px;
    font-feature-settings: normal;
}

.addsheet {
    margin: 5px 0 0 33px;
}

.hdots {
    margin-left: 598px;
    margin-top: 6px;
    width: 18px;
    height: 14px;
    display: flex;
    flex-direction: column;
    align-items: center;
    justify-content: center;
    gap: 2px;
}

.hdots b {
    width: 2px;
    height: 2px;
    background-color: #a8a8a8;
}

.sbtn.h {
    width: 15px;
    height: 15px;
    margin-top: 6px;
}

.hthumb {
    width: 455px;
    height: 15px;
    margin-top: 6px;
    background-color: #fff;
    border: 1px solid #ababab;
}

.htrack {
    width: 26px;
    height: 15px;
    margin-top: 6px;
    background-color: #dcdcdc;
}

/* ステータスバー */
.status {
    height: 22px;
    background-color: #f1f1f1;
    border-top: 1px solid #c6c6c6;
    display: flex;
    align-items: center;
}

.ready {
    padding-left: 7px;
    width: 75px;
}

.views {
    display: flex;
    margin-left: 985px;
}

.views span {
    width: 38px;
    height: 21px;
    display: flex;
    align-items: center;
    justify-content: center;
}

.views .on {
    background-color: #c6c6c6;
}

.zminus {
    width: 7px;
    height: 2px;
    margin-left: 5px;
    background-color: #666;
}

.zslider {
    position: relative;
    width: 100px;
    height: 1px;
    margin-left: 3px;
    background-color: #a8a8a8;
}

.knob {
    position: absolute;
    left: 43px;
    top: -5px;
    width: 4px;
    height: 11px;
    background-color: #666;
}

.tick {
    position: absolute;
    left: 50px;
    top: -3px;
    width: 1px;
    height: 7px;
    background-color: #a8a8a8;
}

.zplus {
    width: 8px;
    height: 8px;
    margin-left: 4px;
    background: linear-gradient(#666, #666) center / 8px 2px no-repeat, linear-gradient(#666, #666) center / 2px 8px no-repeat;
}

.zoom {
    margin-left: 16px;
    font-size: 13px;
    color: #555;
    font-feature-settings: normal;
}
```
